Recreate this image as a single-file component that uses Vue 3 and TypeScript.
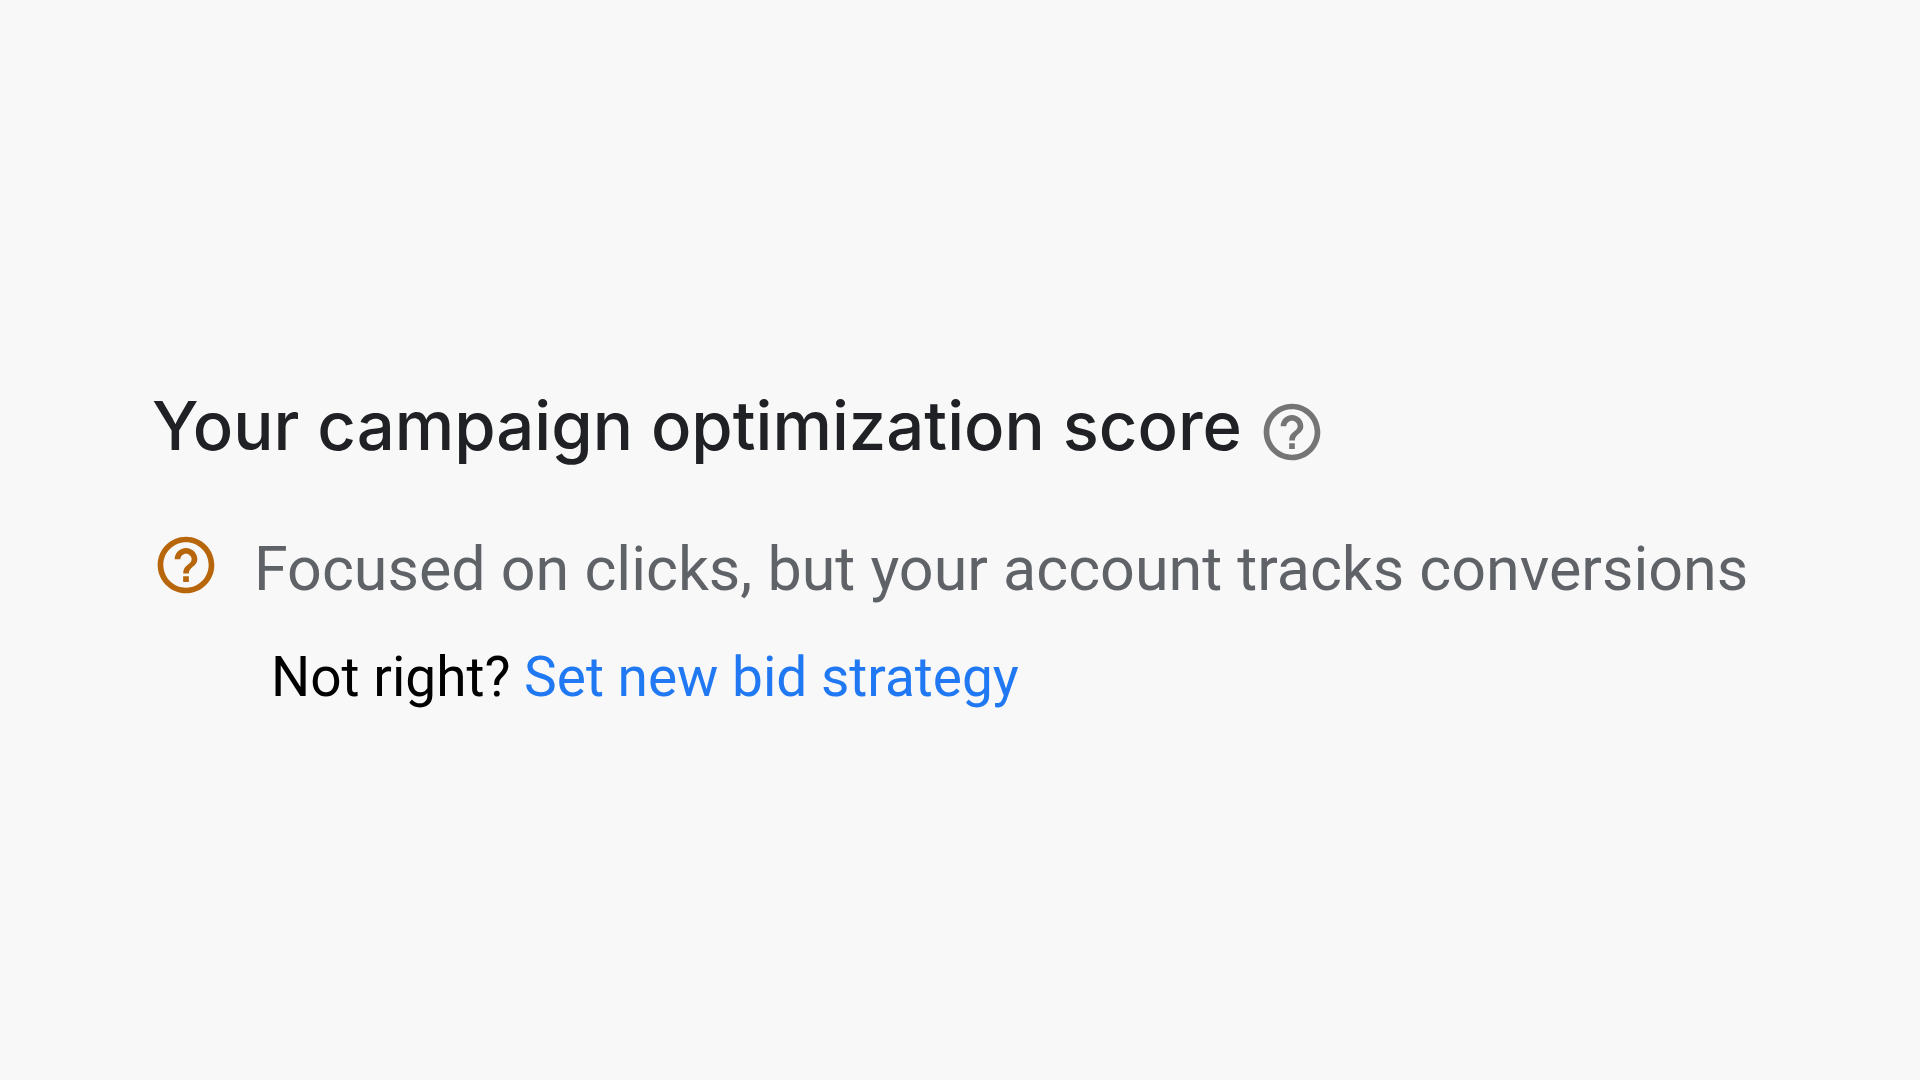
<script setup lang="ts">
const helpOutline =
  'M11 18h2v-2h-2v2zm1-16C6.48 2 2 6.48 2 12s4.48 10 10 10 10-4.48 10-10S17.52 2 12 2zm0 18c-4.41 0-8-3.59-8-8s3.59-8 8-8 8 3.59 8 8-3.59 8-8 8zm0-14c-2.21 0-4 1.79-4 4h2c0-1.1.9-2 2-2s2 .9 2 2c0 2-3 1.75-3 5h2c0-2.25 3-2.5 3-5 0-2.21-1.79-4-4-4z'
</script>

<template>
  <main class="page">
    <header class="heading">
      <h1 class="title">Your campaign optimization score</h1>
      <button class="help" type="button" aria-label="About optimization score">
        <svg class="icon" viewBox="0 0 24 24" aria-hidden="true"><path :d="helpOutline" /></svg>
      </button>
    </header>
    <section class="status">
      <svg class="icon warning" viewBox="0 0 24 24" aria-hidden="true"><path :d="helpOutline" /></svg>
      <p class="message">Focused on clicks, but your account tracks conversions</p>
    </section>
    <p class="action">Not right? <a class="link" href="#">Set new bid strategy</a></p>
  </main>
</template>

<style>
body {
  margin: 0;
  background: #f8f8f8;
}
</style>

<style scoped>
.page {
  box-sizing: border-box;
  min-height: 100vh;
  padding: 386px 120px 80px 152px;
  background: #f8f8f8;
  font-family: Roboto, "Liberation Sans", sans-serif;
}
.heading {
  display: flex;
  align-items: flex-end;
  gap: 16px;
  color: #202124;
}
.title {
  margin: 0;
  font-family: "Google Sans", Inter, sans-serif;
  font-size: 67px;
  font-weight: 500;
  line-height: 80px;
}
.help {
  display: flex;
  padding: 0;
  border: 0;
  background: none;
  color: #757575;
  cursor: pointer;
}
.icon {
  flex: none;
  width: 68px;
  height: 68px;
  fill: currentColor;
}
.status {
  display: flex;
  align-items: flex-start;
  gap: 34px;
  margin-top: 65px;
}
.warning {
  color: #b8660b;
}
.message {
  margin: 0;
  color: #5f6368;
  font-size: 61px;
  line-height: 76px;
}
.action {
  margin: 32px 0 0 119px;
  color: #000;
  font-size: 55px;
  line-height: 76px;
}
.link {
  color: #2079f2;
  text-decoration: none;
}
</style>
